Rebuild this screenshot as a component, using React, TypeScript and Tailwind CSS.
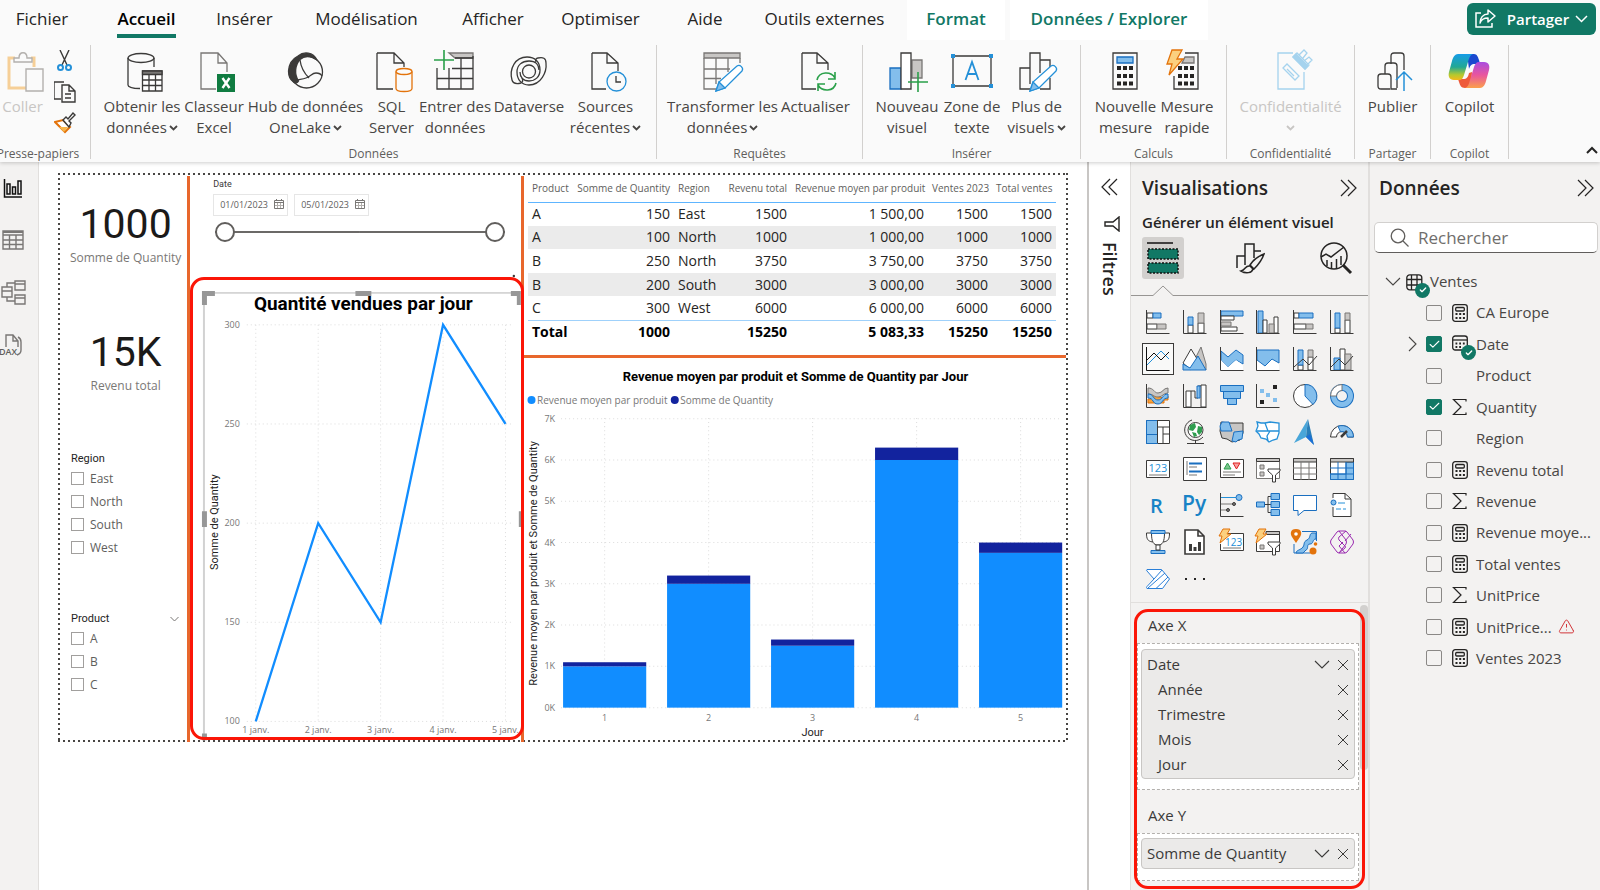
import { ReactNode, useState } from "react";
import { Check, TriangleAlert } from "lucide-react";

const BLUE = "#83beec";
const EDGE = "#1a6fc0";
const GRAY = "#c8c6c4";
const MID = "#797775";
const DARK = "#3b3a39";

const GLYPHS = {
  down: { w: 16, h: 10, d: "M1 1l7 7 7-7" },
  right: { w: 10, h: 16, d: "M1 1l7 7-7 7" },
  smallDown: { w: 9, h: 6, d: "M1 1l3.500 3.500L8 1" },
  up: { w: 12, h: 8, d: "M1 7l5-5 5 5" },
  close: { w: 12, h: 12, d: "M1 1l10 10M11 1L1 11" },
  open: { w: 17, h: 18, d: "M1 1l8 8-8 8M8 1l8 8-8 8" },
  collapse: { w: 17, h: 18, d: "M9 1L1 9l8 8M16 1L8 9l8 8" },
};

function Glyph({ name, weight = 1.2 }: { name: keyof typeof GLYPHS; weight?: number }) {
  const g = GLYPHS[name];
  return (
    <svg
      width={g.w}
      height={g.h}
      viewBox={`0 0 ${g.w} ${g.h}`}
      fill="none"
      stroke="currentColor"
      strokeWidth={weight}
      className="block shrink-0"
    >
      <path d={g.d} />
    </svg>
  );
}

/* ---------- ribbon ---------- */

const TABS = [
  { label: "Fichier", className: "w-[84px]" },
  { label: "Accueil", className: "w-[125px]" },
  { label: "Insérer", className: "w-[71px]" },
  { label: "Modélisation", className: "w-[173px]" },
  { label: "Afficher", className: "w-[80px]" },
  { label: "Optimiser", className: "w-[135px]" },
  { label: "Aide", className: "w-[74px]" },
  { label: "Outils externes", className: "w-[165px]" },
];

function RibbonIcon({ children }: { children: ReactNode }) {
  return (
    <svg
      width="40"
      height="40"
      viewBox="0 0 40 40"
      fill="none"
      stroke={DARK}
      strokeWidth="1.3"
      className="overflow-visible"
    >
      {children}
    </svg>
  );
}

const ICONS = {
  getData: (
    <RibbonIcon>
      <ellipse cx="19" cy="6" rx="13" ry="4.500" />
      <path d="M6 6v27c0 2 5 3.500 12 3.500M32 6v9" />
      <path d="M20.500 19h19.500v20H20.500z" fill="#fff" />
      <path d="M20.500 19h19.500v3.500H20.500z" fill={MID} />
      <path d="M20.500 28h19.500M20.500 33.500h19.500M27 22v17M33.500 22v17" />
    </RibbonIcon>
  ),
  excel: (
    <RibbonIcon>
      <path d="M33 20V11L24 1H7v36h15M24 1v10h9" stroke={MID} />
      <path d="M23 22h18v18H23z" fill="#107c41" stroke="none" />
      <path d="M28.500 26l7 10M35.500 26l-7 10" stroke="#fff" strokeWidth="2.400" />
    </RibbonIcon>
  ),
  hub: (
    <RibbonIcon>
      <path
        d="M12 4C8 6 3 11 2.500 19c0 5 2 9 5 11 2 2 4 1 5-1C8 22 9 13 14 7.500 19 3 25 4 31 8 27 0 18-1 12 4z"
        fill={DARK}
      />
      <circle cx="20.500" cy="20" r="16" />
      <path d="M14 8c1 8 4 13 9 18M7 30c4-3 8-2 13-4 5-2 6-5 10-5 3 0 5 1 6 3" />
    </RibbonIcon>
  ),
  sql: (
    <RibbonIcon>
      <path d="M5 1v36h16M5 1h17l10 10v4M22 1v10h10" />
      <path d="M24 19.500v17c0 4 16 4 16 0v-17" stroke="#e3730b" fill="#fafafa" />
      <ellipse cx="32" cy="19.500" rx="8" ry="3" stroke="#e3730b" />
    </RibbonIcon>
  ),
  enter: (
    <RibbonIcon>
      <path d="M14 1h24v5H20z" fill={GRAY} stroke={MID} />
      <path d="M2 16v21h36V4M2 26.500h36M17 16.500h21M14 16v21M26 6v31M20 6h18" />
      <path d="M9-2v20M-1 8h20" stroke="#2aa04a" strokeWidth="1.600" />
    </RibbonIcon>
  ),
  dataverse: (
    <RibbonIcon>
      <path d="M12 31c-4 1-8 1-9-3C0 17 6 5 18 5c8 0 13 5 13 13 0 7-5 11-11 11s-9-4-9-9" />
      <path d="M29 6c5-1 8 0 8 5 1 9-5 22-17 22-8 0-12-6-12-13S13 9 20 9s10 4 10 9" />
      <path d="M12 31c2-1 2-3 1-5M29 6c-2 0-3 2-2 4" />
      <circle cx="20" cy="19.500" r="6.500" />
    </RibbonIcon>
  ),
  recent: (
    <RibbonIcon>
      <path d="M6 1v36h14M6 1h15l11 10v8M21 1v10h11" />
      <circle cx="30.500" cy="29.500" r="9.500" stroke="#2490d8" />
      <path d="M30 24v6h5" />
    </RibbonIcon>
  ),
  transform: (
    <RibbonIcon>
      <path d="M1 1h36v5H1z" fill={GRAY} stroke={MID} />
      <path d="M37 6v5M1 6v31h12M1 17h26M1 26.500h17M13 6v26M25 6v14" stroke={MID} />
      <path d="M13 39l3-9 18-16c3-2 7 2 5 5L22 36z" stroke="#2490d8" fill="#fff" />
      <path d="M13 39l3-9 6 6z" fill={BLUE} stroke="#2490d8" />
    </RibbonIcon>
  ),
  refresh: (
    <RibbonIcon>
      <path d="M6 1v36h14M6 1h15l11 10v7M21 1v10h11" />
      <path
        d="M21 28c2-9 14-9 18-2M39 20v7h-7M40 31c-2 9-14 9-18 2M22 39v-7h7"
        stroke="#2aa04a"
        strokeWidth="1.600"
      />
    </RibbonIcon>
  ),
  newVisual: (
    <RibbonIcon>
      <path d="M25 8h10v18H25z" fill={GRAY} stroke={MID} />
      <path d="M3 16h11v21H3z" fill={BLUE} stroke={EDGE} />
      <path d="M14 37V1h10v36z" fill="#fff" />
      <path d="M31 20v20M21 30h20" stroke="#2aa04a" strokeWidth="1.600" />
    </RibbonIcon>
  ),
  textBox: (
    <RibbonIcon>
      <path d="M1 4h38v30H1z" />
      <path d="M-1 2h4v4h-4zM37 2h4v4h-4zM-1 32h4v4h-4zM37 32h4v4h-4z" fill="#2490d8" stroke="none" />
      <path d="M13.500 28L20 10l6.500 18M16 22h8" stroke="#2490d8" strokeWidth="1.800" />
    </RibbonIcon>
  ),
  moreVisuals: (
    <RibbonIcon>
      <path d="M13 37H3V16h10v16M13 26V1h10v20M23 8h10v8M33 26v11H23" />
      <path d="M13 39l3-9 18-16c3-2 7 2 5 5L22 36z" stroke="#2490d8" fill="#fff" />
      <path d="M13 39l3-9 6 6z" fill={BLUE} stroke="#2490d8" />
    </RibbonIcon>
  ),
  measure: (
    <RibbonIcon>
      <path d="M7 1h24v36H7z" />
      <path d="M11 5h16v6H11z" fill={BLUE} stroke={EDGE} />
      <path
        d="M11 16h16M11 24h16M11 31.500h16"
        strokeWidth="4"
        strokeDasharray="4 2"
        stroke="#252423"
      />
    </RibbonIcon>
  ),
  quick: (
    <RibbonIcon>
      <path d="M18 1h13v36H7V24" />
      <path d="M18 5h9v6H15z" fill={GRAY} stroke={MID} />
      <path d="M11 16h16M11 24h16M11 31.500h16" strokeWidth="4" strokeDasharray="4 2" stroke="#252423" />
      <path d="M5-2h10l-5 9h6L2 23l3-11H0z" fill="#fbd07f" stroke="#e3730b" />
    </RibbonIcon>
  ),
  sensitivity: (
    <RibbonIcon>
      <g stroke="#a5d3ee">
        <path d="M22 1H7v36h26V20" />
        <path d="M12 16l4-4 12 12-4 4zM16 17l7 7" />
        <path d="M22 5l4-4 12 12-4 4zM28 3l5-5 3 3-4 5M33 9l5-4 3 3-5 5" />
        <path d="M22 5l3-3 12 12-3 3z" fill="#a5d3ee" />
      </g>
    </RibbonIcon>
  ),
  publish: (
    <RibbonIcon>
      <path d="M18 12V4c0-2 1-3 3-3h7c2 0 3 1 3 3v14M12 22v-8c0-2 1-3 3-3h6c2 0 3 1 3 3v8" />
      <path d="M17 37H8c-1 0-3 0-3-3v-9c0-2 1-3 3-3h7c2 0 3 1 3 3v12h6M24 22v14" />
      <path d="M31 39V20M23 28l8-8 8 8" stroke="#2490d8" strokeWidth="1.500" />
    </RibbonIcon>
  ),
  copilot: (
    <RibbonIcon>
      <defs>
        <linearGradient id="cp-a" x1="0" y1="0" x2="0" y2="1">
          <stop offset="0" stopColor="#159ce8" />
          <stop offset="0.500" stopColor="#22a894" />
          <stop offset="0.800" stopColor="#b5c92e" />
          <stop offset="1" stopColor="#f5b91b" />
        </linearGradient>
        <linearGradient id="cp-b" x1="0" y1="0" x2="0" y2="1">
          <stop offset="0" stopColor="#a94de0" />
          <stop offset="0.500" stopColor="#e9559e" />
          <stop offset="1" stopColor="#fba04b" />
        </linearGradient>
      </defs>
      <g stroke="none" transform="translate(-1 0)">
        <path d="M18 2h7c3 0 4 3 5 6l1 4h-5c-4 0-5 2-6 5z" fill="#1a49cf" />
        <path d="M22 36h-6c-4 0-5-3-6-6l-1-3h5c4 0 5-2 6-6l3-1z" fill="#ee5a3a" />
        <path d="M9 2h15c-3 1-4 4-5 8l-4 13c-1 3-2 5-5 5H5c-5 0-6-4-5-8L3 9c1-4 3-7 6-7z" fill="url(#cp-a)" />
        <path d="M31 36H16c3-1 4-4 5-8l4-13c1-3 2-5 5-5h5c5 0 6 4 5 8l-3 11c-1 4-3 7-6 7z" fill="url(#cp-b)" />
      </g>
    </RibbonIcon>
  ),
};

interface Tool {
  icon: ReactNode;
  lines: string[];
  className: string;
  menu?: boolean;
  disabled?: boolean;
}

const GROUPS: { name: string; className: string; tools: Tool[] }[] = [
  {
    name: "Données",
    className: "w-[566px]",
    tools: [
      { icon: ICONS.getData, lines: ["Obtenir les", "données"], className: "w-[77px]", menu: true },
      { icon: ICONS.excel, lines: ["Classeur", "Excel"], className: "w-[67px]" },
      { icon: ICONS.hub, lines: ["Hub de données", "OneLake"], className: "w-[116px]", menu: true },
      { icon: ICONS.sql, lines: ["SQL", "Server"], className: "w-[56px]" },
      { icon: ICONS.enter, lines: ["Entrer des", "données"], className: "w-[71px]" },
      { icon: ICONS.dataverse, lines: ["Dataverse"], className: "w-[77px]" },
      { icon: ICONS.recent, lines: ["Sources", "récentes"], className: "w-[76px]", menu: true },
    ],
  },
  {
    name: "Requêtes",
    className: "w-[206px]",
    tools: [
      { icon: ICONS.transform, lines: ["Transformer les", "données"], className: "w-[112px]", menu: true },
      { icon: ICONS.refresh, lines: ["Actualiser"], className: "w-[74px]" },
    ],
  },
  {
    name: "Insérer",
    className: "w-[218px]",
    tools: [
      { icon: ICONS.newVisual, lines: ["Nouveau", "visuel"], className: "w-[67px]" },
      { icon: ICONS.textBox, lines: ["Zone de", "texte"], className: "w-[63px]" },
      { icon: ICONS.moreVisuals, lines: ["Plus de", "visuels"], className: "w-[66px]", menu: true },
    ],
  },
  {
    name: "Calculs",
    className: "w-[146px]",
    tools: [
      { icon: ICONS.measure, lines: ["Nouvelle", "mesure"], className: "w-[67px]" },
      { icon: ICONS.quick, lines: ["Mesure", "rapide"], className: "w-[56px]" },
    ],
  },
  {
    name: "Confidentialité",
    className: "w-[128px]",
    tools: [
      { icon: ICONS.sensitivity, lines: ["Confidentialité", ""], className: "w-[110px]", menu: true, disabled: true },
    ],
  },
  {
    name: "Partager",
    className: "w-[76px]",
    tools: [{ icon: ICONS.publish, lines: ["Publier"], className: "w-[60px]" }],
  },
  {
    name: "Copilot",
    className: "w-[78px]",
    tools: [{ icon: ICONS.copilot, lines: ["Copilot"], className: "w-[60px]" }],
  },
];

function ToolButton({ tool }: { tool: Tool }) {
  return (
    <button
      disabled={tool.disabled}
      className={`flex shrink-0 flex-col items-center text-[15px] leading-[21px] whitespace-nowrap ${
        tool.disabled ? "text-[#c8c6c4]" : "text-[#484644]"
      } ${tool.className}`}
    >
      {tool.icon}
      <span className="mt-1">{tool.lines[0]}</span>
      {tool.lines.length > 1 && (
        <span className="flex h-[21px] items-center gap-0.5">
          {tool.lines[1]}
          {tool.menu && <Glyph name="smallDown" weight={1.8} />}
        </span>
      )}
    </button>
  );
}

function Ribbon() {
  return (
    <header className="relative z-10 h-[162px] bg-[#fafafa] shadow-[0_1px_4px_rgba(0,0,0,0.2)]">
      <nav className="flex h-[45px] items-start text-[17px] text-[#252423]">
        {TABS.map((t) => (
          <button
            key={t.label}
            className={`flex h-[38px] shrink-0 justify-center whitespace-nowrap ${t.className}`}
          >
            <span
              className={
                t.label === "Accueil"
                  ? "h-[38px] border-b-4 border-[#117865] pt-1.5 font-semibold text-black"
                  : "pt-1.5"
              }
            >
              {t.label}
            </span>
          </button>
        ))}
        <button className="h-10 w-[98px] shrink-0 bg-white pb-[3px] font-semibold text-[#117865]">
          Format
        </button>
        <button className="ml-[5px] h-10 w-[198px] shrink-0 bg-white pb-[3px] font-semibold text-[#117865]">
          Données / Explorer
        </button>
        <button className="mt-[3px] mr-1 ml-auto flex h-8 w-[129px] shrink-0 items-center justify-center gap-2.5 rounded-md bg-[#117865] text-[15px] font-semibold text-white">
          <svg width="22" height="20" viewBox="0 0 22 20" fill="none" stroke="#fff" strokeWidth="1.500">
            <path d="M6 4H1v14h16v-4" />
            <path d="M13 1l7 6-7 6V9c-4 0-7 2-8 5 0-5 3-9 8-9z" strokeLinejoin="round" />
          </svg>
          <span className="flex items-center gap-1.5">
            Partager
            <svg width="13" height="8" viewBox="0 0 13 8" fill="none" stroke="#fff" strokeWidth="1.500">
              <path d="M1 1l5.500 5.500L12 1" />
            </svg>
          </span>
        </button>
      </nav>

      <div className="flex">
        <div className="flex h-[114px] w-[91px] shrink-0 flex-col justify-between border-r border-[#d2d0ce]">
          <div className="flex pt-[5px]">
            <button disabled className="flex w-[45px] flex-col items-center pt-0.5 text-[15px] leading-[21px] text-[#c8c6c4]">
              <svg width="40" height="40" viewBox="0 0 40 40" fill="none" strokeWidth="1.400" className="overflow-visible">
                <path d="M12 6H6v30h17M28 6h3v9" stroke="#f6cf97" strokeWidth="3" />
                <path d="M11 10V6h5c0-7 8-7 8 0h5v4z" stroke="#b3b0ad" fill="#fafafa" />
                <path d="M23 17h17v22H23z" stroke="#b3b0ad" fill="#fafafa" />
              </svg>
              <span className="mt-1">Coller</span>
            </button>
            <div className="flex flex-col gap-[9px] pl-[9px]">
              <button aria-label="Couper">
                <svg width="22" height="22" viewBox="0 0 22 22" fill="none" stroke={DARK} strokeWidth="1.400">
                  <path d="M6 0l7 15M15 0L8 15" />
                  <circle cx="6.500" cy="17.500" r="2.500" stroke="#2490d8" strokeWidth="2" />
                  <circle cx="14.500" cy="17.500" r="2.500" stroke="#2490d8" strokeWidth="2" />
                </svg>
              </button>
              <button aria-label="Copier">
                <svg width="22" height="22" viewBox="0 0 22 22" fill="none" stroke={DARK} strokeWidth="1.400">
                  <path d="M7 18H0V1h10M8 4h7l6 6v11H8zM15 4v6h6M11 13h6M11 17h6" />
                </svg>
              </button>
              <button aria-label="Reproduire la mise en forme">
                <svg width="22" height="22" viewBox="0 0 22 22" fill="none" strokeWidth="1.400">
                  <path d="M1 10l8-2 7 7-5 5z" fill="#fff" stroke="#e3730b" strokeWidth="2" />
                  <path d="M5 15h9l-4 5z" fill="#f7b64b" />
                  <path d="M9 8l3-3 2 2 5-6 2 2-6 6 2 2-2 4z" stroke={DARK} fill="#fff" />
                </svg>
              </button>
            </div>
          </div>
          <p className="-mb-px flex justify-center pr-3.5 text-[12px] leading-3 whitespace-nowrap text-[#605e5c]">
            Presse-papiers
          </p>
        </div>
        {GROUPS.map((g) => (
          <div
            key={g.name}
            className={`flex h-[114px] shrink-0 flex-col justify-between border-r border-[#d2d0ce] ${g.className}`}
          >
            <div className="flex justify-center pt-[7px]">
              {g.tools.map((t) => (
                <ToolButton key={t.lines[0]} tool={t} />
              ))}
            </div>
            <p className="-mb-px text-center text-[12px] leading-3 text-[#605e5c]">{g.name}</p>
          </div>
        ))}
        <button aria-label="Réduire le ruban" className="mr-0.5 ml-auto self-end pb-[5px]">
          <Glyph name="up" weight={2} />
        </button>
      </div>
    </header>
  );
}

/* ---------- left rail ---------- */

function Rail() {
  return (
    <nav className="flex w-[39px] shrink-0 flex-col items-start gap-7 border-r border-[#e1dfdd] bg-[#f3f2f1] pt-[14px]">
      <button aria-label="Rapport" className="h-6">
        <svg width="24" height="24" viewBox="0 0 24 24" fill="none" stroke="#111" strokeWidth="1.500">
          <path d="M4.500 3v18H22M7 8h3v10H7zM12.500 11h3v7h-3zM18 5h3v13h-3z" />
        </svg>
      </button>
      <button aria-label="Table" className="h-6">
        <svg width="26" height="24" viewBox="0 0 26 24" fill="none" stroke={MID} strokeWidth="1.400">
          <path d="M3 3h20v18H3zM3 7h20M3 12h20M3 16.500h20M9.500 7v14M16 7v14" />
          <path d="M3 4h20" strokeWidth="2" />
        </svg>
      </button>
      <button aria-label="Modèle" className="h-6">
        <svg width="26" height="26" viewBox="0 0 26 26" fill="none" stroke={MID} strokeWidth="1.400">
          <path d="M15 1h10v9H15zM15 4h10M15 15h10v9H15zM15 18h10M2 7h10v10H2zM2 11h10M7 7V3h8M7 17v4h8" />
        </svg>
      </button>
      <button aria-label="Vue de requête DAX" className="h-6">
        <svg width="24" height="26" viewBox="0 0 24 26" fill="none" stroke={MID} strokeWidth="1.400">
          <path d="M6 15V3h7l5 6v6M13 3v6h5M18 5c2 1 3 3 3 5v8c0 2-1 4-4 5" />
          <text x="-1" y="23" fontSize="9" fontWeight="600" fill="#605e5c" stroke="none">
            DAX
          </text>
        </svg>
      </button>
    </nav>
  );
}

/* ---------- report ---------- */

function Kpi({ value, label }: { value: string; label: string }) {
  return (
    <div className="pl-1 text-center">
      <p className="font-['Roboto',sans-serif] text-[41px] leading-[48px] text-[#1b1a19]">{value}</p>
      <p className="text-[12px] leading-5 whitespace-nowrap text-[#7a7876]">{label}</p>
    </div>
  );
}

function Slicer({ title, options, open }: { title: string; options: string[]; open?: boolean }) {
  return (
    <fieldset className="pr-2 pl-[11px]">
      <legend className="flex w-full items-center justify-between font-['Roboto',sans-serif] text-[11px] leading-4 text-[#252423]">
        {title}
        {open && (
          <svg width="9" height="6" viewBox="0 0 9 6" fill="none" stroke={MID}>
            <path d="M.5 1l4 4 4-4" />
          </svg>
        )}
      </legend>
      {options.map((o) => (
        <label key={o} className="flex h-[23px] items-center gap-1.5 text-[12px] text-[#605e5c]">
          <input type="checkbox" className="size-[13px] appearance-none border border-[#a19f9d] bg-white" />
          {o}
        </label>
      ))}
    </fieldset>
  );
}

function DateBox({ label, value }: { label: string; value: string }) {
  return (
    <label className="flex h-[22px] w-[75px] items-center justify-between border border-[#e6e6e6] pr-[3px] pl-1.5">
      <input aria-label={label} defaultValue={value} className="w-[52px] text-[9px] text-[#605e5c]" />
      <svg width="10" height="10" viewBox="0 0 10 10" fill="none" stroke={MID} className="-mt-0.5">
        <path d="M.5 1.500h9v8h-9zM.5 3.500h9M2.500 0v2M7.500 0v2" />
        <path d="M3.500 4v5M6.500 4v5M1 6.500h8" stroke="#b3b0ad" />
      </svg>
    </label>
  );
}

const THUMB =
  "h-5 w-1/2 appearance-none bg-[linear-gradient(#6b6967,#6b6967)] bg-[length:100%_2px] bg-center bg-no-repeat [&::-webkit-slider-thumb]:size-5 [&::-webkit-slider-thumb]:appearance-none [&::-webkit-slider-thumb]:rounded-full [&::-webkit-slider-thumb]:border-2 [&::-webkit-slider-thumb]:border-[#605e5c] [&::-webkit-slider-thumb]:bg-white";

function DateSlicer() {
  return (
    <section className="h-[102px] pt-0.5 pr-4 pl-[23px]">
      <h3 className="font-['Roboto',sans-serif] text-[9px] leading-3 text-[#3b3a39]">Date</h3>
      <div className="mt-1 flex gap-1.5">
        <DateBox label="Date de début" value="01/01/2023" />
        <DateBox label="Date de fin" value="05/01/2023" />
      </div>
      <div className="mt-1.5 flex pl-0.5">
        <input type="range" aria-label="Début" defaultValue={0} className={THUMB} />
        <input type="range" aria-label="Fin" defaultValue={100} className={THUMB} />
      </div>
    </section>
  );
}

const DAYS = [100, 200, 150, 300, 250];
const dayX = (i: number) => 66 + i * 62.65;
const qtyY = (v: number) => 445 - (v - 100) * 1.99;

function LineChart() {
  return (
    <section className="relative">
      <svg
        viewBox="0 0 332 464"
        className="block w-full overflow-visible"
        role="img"
        aria-label="Quantité vendues par jour"
      >
        <path d="M14 14v450" stroke="#d2d2d2" strokeWidth="2" />
        <path d="M14 15h318" stroke="#b3b3b3" />
        <path
          d="M12 13h13v5h-8v9h-5zM166 13h16v5h-16zM322 13h10v14h-4v-9h-6zM12 234h5v16h-5zM330 234h3v16h-3zM12 457h5v7h-5z"
          fill="#979797"
        />
        <g stroke="#dcdcdc" strokeDasharray="1 3">
          {[100, 150, 200, 250, 300].map((v) => (
            <path key={v} d={`M57 ${qtyY(v)}H322`} />
          ))}
          {DAYS.map((_, i) => (
            <path key={i} d={`M${dayX(i)} 47V445`} />
          ))}
        </g>
        <polyline
          points={DAYS.map((v, i) => `${dayX(i)},${qtyY(v)}`).join(" ")}
          fill="none"
          stroke="#118dff"
          strokeWidth="2.300"
        />
        <text x="174" y="32" textAnchor="middle" fontSize="19" fontWeight="700" className="font-['Roboto',sans-serif]">
          Quantité vendues par jour
        </text>
        <g fontSize="9" fill="#777">
          {[100, 150, 200, 250, 300].map((v) => (
            <text key={v} x="50" y={qtyY(v) + 3} textAnchor="end">
              {v}
            </text>
          ))}
          {DAYS.map((_, i) => (
            <text key={i} x={dayX(i)} y="457" textAnchor="middle">
              {i + 1} janv.
            </text>
          ))}
        </g>
        <text
          transform="translate(28 245) rotate(-90)"
          textAnchor="middle"
          fontSize="11"
          fill="#252423"
          className="font-['Roboto',sans-serif]"
        >
          Somme de Quantity
        </text>
        <circle cx="325" cy="-2" r="1.200" fill="#3b3a39" />
      </svg>
      <div className="pointer-events-none absolute -top-px right-0 bottom-0 left-0 -mr-[3px] rounded-[14px] border-[3px] border-[#fb1607]" />
    </section>
  );
}

const ROWS = [
  ["A", "150", "East", "1500", "1 500,00", "1500", "1500"],
  ["A", "100", "North", "1000", "1 000,00", "1000", "1000"],
  ["B", "250", "North", "3750", "3 750,00", "3750", "3750"],
  ["B", "200", "South", "3000", "3 000,00", "3000", "3000"],
  ["C", "300", "West", "6000", "6 000,00", "6000", "6000"],
];
const TOTALS = ["Total", "1000", "", "15250", "5 083,33", "15250", "15250"];
const HEADS = [
  { label: "Product", className: "w-[44px]" },
  { label: "Somme de Quantity", className: "w-[102px]" },
  { label: "Region", className: "w-[48px]" },
  { label: "Revenu total", className: "w-[69px]" },
  { label: "Revenue moyen par produit", className: "w-[137px]" },
  { label: "Ventes 2023", className: "w-[64px]" },
  { label: "Total ventes", className: "w-[64px]" },
];
const align = (i: number) => (i === 0 || i === 2 ? "text-left" : "text-right");

function SalesTable() {
  return (
    <section className="h-[179px] pr-2.5 pl-1">
      <table className="h-[167px] w-full table-fixed border-collapse text-[14px] text-[#252423]">
        <thead>
          <tr className="h-[26px] border-b border-[#5eb5ff] text-[10px] whitespace-nowrap text-[#605e5c]">
            {HEADS.map((h, i) => (
              <th key={h.label} className={`px-1 font-normal ${align(i)} ${h.className}`}>
                {h.label}
              </th>
            ))}
          </tr>
        </thead>
        <tbody>
          {ROWS.map((r, n) => (
            <tr key={n} className={`h-[23px] leading-4 ${n % 2 ? "bg-[#ebebeb]" : ""}`}>
              {r.map((c, i) => (
                <td key={i} className={`px-1 ${align(i)}`}>
                  {c}
                </td>
              ))}
            </tr>
          ))}
        </tbody>
        <tfoot>
          <tr className="h-[23px] border-t border-[#9fd1fb] leading-4 font-bold text-black">
            {TOTALS.map((c, i) => (
              <td key={i} className={`px-1 ${align(i)}`}>
                {c}
              </td>
            ))}
          </tr>
        </tfoot>
      </table>
    </section>
  );
}

const REVENUE = [1000, 3000, 1500, 6000, 3750];
const QTY = [100, 200, 150, 300, 250];
const barX = (i: number) => 80.5 + i * 103.8;
const revY = (v: number) => 349 - (v / 1000) * 41.2;

function BarChart() {
  return (
    <section className="border-t-[3px] border-[#e8672c]">
      <svg viewBox="0 0 541 383" className="block w-full" role="img" aria-label="Revenue moyen par produit">
        <text x="271" y="23" textAnchor="middle" fontSize="13" fontWeight="700" className="font-['Roboto',sans-serif]">
          Revenue moyen par produit et Somme de Quantity par Jour
        </text>
        <circle cx="7.500" cy="42" r="4" fill="#118dff" />
        <circle cx="150.500" cy="42" r="4" fill="#12239e" />
        <g fontSize="10" fill="#777">
          <text x="13" y="46">
            Revenue moyen par produit
          </text>
          <text x="156" y="46">
            Somme de Quantity
          </text>
        </g>
        <g stroke="#dcdcdc" strokeDasharray="1 3">
          {[0, 1, 2, 3, 4, 5, 6, 7].map((k) => (
            <path key={k} d={`M37 ${revY(k * 1000)}H536`} />
          ))}
          {REVENUE.map((_, i) => (
            <path key={i} d={`M${barX(i)} 60V349`} />
          ))}
        </g>
        {REVENUE.map((v, i) => (
          <g key={i}>
            <rect x={barX(i) - 41.5} y={revY(v)} width="83" height={349 - revY(v)} fill="#118dff" />
            <rect x={barX(i) - 41.5} y={revY(v + QTY[i])} width="83" height={revY(v) - revY(v + QTY[i])} fill="#12239e" />
          </g>
        ))}
        <g fontSize="9" fill="#777">
          {[0, 1, 2, 3, 4, 5, 6, 7].map((k) => (
            <text key={k} x="31" y={revY(k * 1000) + 3} textAnchor="end">
              {k}K
            </text>
          ))}
          {REVENUE.map((_, i) => (
            <text key={i} x={barX(i)} y="362" textAnchor="middle">
              {i + 1}
            </text>
          ))}
        </g>
        <g fontSize="11" fill="#252423" textAnchor="middle" className="font-['Roboto',sans-serif]">
          <text x="288" y="377">
            Jour
          </text>
          <text transform="translate(13 205) rotate(-90)">Revenue moyen par produit et Somme de Quantity</text>
        </g>
      </svg>
    </section>
  );
}

// page boundary: 2px dots every 5px
const BOUNDARY =
  "[background:repeating-linear-gradient(90deg,#484644_0_2px,#fff0_2px_5px)_top/100%_2px_no-repeat,repeating-linear-gradient(90deg,#484644_0_2px,#fff0_2px_5px)_bottom/100%_2px_no-repeat,repeating-linear-gradient(180deg,#484644_0_2px,#fff0_2px_5px)_left/2px_100%_no-repeat,repeating-linear-gradient(180deg,#484644_0_2px,#fff0_2px_5px)_right/2px_100%_no-repeat]";

function Report() {
  return (
    <main className="min-w-0 flex-1 px-[19px] pt-[11px]">
      <div className={`grid grid-cols-[128fr_336fr_541fr] px-0.5 pt-[3px] ${BOUNDARY}`}>
        <div className="pt-6">
          <Kpi value="1000" label="Somme de Quantity" />
          <div className="mt-[60px]">
            <Kpi value="15K" label="Revenu total" />
          </div>
          <div className="mt-[55px]">
            <Slicer title="Region" options={["East", "North", "South", "West"]} />
          </div>
          <div className="mt-[52px]">
            <Slicer title="Product" options={["A", "B", "C"]} open />
          </div>
        </div>
        <div className="border-l-[3px] border-[#e8672c]">
          <DateSlicer />
          <LineChart />
        </div>
        <div className="border-l-[3px] border-[#e8672c]">
          <SalesTable />
          <BarChart />
        </div>
      </div>
    </main>
  );
}

/* ---------- visualisations ---------- */

const AXES = <path d="M.5 0v23.500h23" stroke={DARK} fill="none" />;
const BOLT = <path d="M3-1h7L7 4h4L0 13l2-7h-3z" fill="#fbd07f" stroke="#e3730b" />;
const FUNNEL = <path d="M12 12h12v2l-4.500 4v7h-3v-7L12 14z" fill="#fff" />;

const GALLERY: { name: string; art: ReactNode }[] = [
  {
    name: "Barres empilées",
    art: (
      <>
        <path d="M1 3h6v5H1zM1 14h10v5H1z" fill="#fff" />
        <path d="M7 3h8v5H7z" fill={BLUE} stroke={EDGE} />
        <path d="M11 14h9v5h-9z" fill={GRAY} stroke={MID} />
        {AXES}
      </>
    ),
  },
  {
    name: "Histogramme empilé",
    art: (
      <>
        <path d="M5 15h5v8H5zM15 13h6v10h-6z" fill="#fff" />
        <path d="M5 7h5v8H5z" fill={BLUE} stroke={EDGE} />
        <path d="M15 3h6v10h-6z" fill={GRAY} stroke={MID} />
        {AXES}
      </>
    ),
  },
  {
    name: "Barres groupées",
    art: (
      <>
        <path d="M1 1h22v5H1z" fill={BLUE} stroke={EDGE} />
        <path d="M1 6h13v4H1zM1 17h16v4H1z" fill="#fff" />
        <path d="M1 12h10v4H1z" fill={GRAY} stroke={MID} />
        {AXES}
      </>
    ),
  },
  {
    name: "Histogramme groupé",
    art: (
      <>
        <path d="M2 1h5v22H2z" fill={BLUE} stroke={EDGE} />
        <path d="M7 10h4v13H7zM18 7h4v16h-4z" fill="#fff" />
        <path d="M13 14h5v9h-5z" fill={GRAY} stroke={MID} />
        {AXES}
      </>
    ),
  },
  {
    name: "Barres empilées 100 %",
    art: (
      <>
        <path d="M1 3h5v5H1zM1 14h12v5H1z" fill="#fff" />
        <path d="M6 3h14v5H6z" fill={BLUE} stroke={EDGE} />
        <path d="M13 14h7v5h-7z" fill={GRAY} stroke={MID} />
        {AXES}
      </>
    ),
  },
  {
    name: "Histogramme empilé 100 %",
    art: (
      <>
        <path d="M5 18h5v5H5zM15 10h5v13h-5z" fill="#fff" />
        <path d="M5 3h5v15H5z" fill={BLUE} stroke={EDGE} />
        <path d="M15 3h5v7h-5z" fill={GRAY} stroke={MID} />
        {AXES}
      </>
    ),
  },
  {
    name: "Courbes",
    art: (
      <>
        <path d="M1 18l10-10 4-4 8 8" fill="none" stroke="#2490d8" />
        <path d="M1 13l7-7 7 7 8-8" fill="none" stroke="#111" />
        <path d="M.5 0v23.500h23" fill="none" stroke="#111" />
      </>
    ),
  },
  {
    name: "Aires",
    art: (
      <>
        <path d="M12 12l6-12 5 17v6z" fill={GRAY} stroke={MID} />
        <path d="M0 16L8 2l8 13-8 8z" fill="#fff" />
        <path d="M0 17l7 4 8-12 8 14H0z" fill={BLUE} stroke={EDGE} />
      </>
    ),
  },
  {
    name: "Aires empilées",
    art: (
      <>
        <path d="M1 4l7 6 8-7 7 5v9l-7-4-8 7-7-7z" fill={BLUE} stroke={EDGE} />
        <path d="M1 13l7 7 8-7 7 5v5H1z" fill="#fff" stroke="none" />
        {AXES}
      </>
    ),
  },
  {
    name: "Aires empilées 100 %",
    art: (
      <>
        <path d="M1 13l8 6 7-7 7 5v6H1z" fill="#fff" stroke="none" />
        <path d="M1 3h22v13l-7-4-7 7-8-6z" fill={BLUE} stroke={EDGE} />
        {AXES}
      </>
    ),
  },
  {
    name: "Courbe et histogramme empilé",
    art: (
      <>
        <path d="M5 18h5v5H5zM15 10h5v13h-5z" fill="#fff" />
        <path d="M5 3h5v15H5z" fill={BLUE} stroke={EDGE} />
        <path d="M15 3h5v7h-5z" fill={GRAY} stroke={MID} />
        <path d="M1 20l9-8 6 6 8-9" fill="none" />
        {AXES}
      </>
    ),
  },
  {
    name: "Courbe et histogramme groupé",
    art: (
      <>
        <path d="M10 2h5v21h-5z" fill="#fff" />
        <path d="M4 11h6v12H4z" fill={BLUE} stroke={EDGE} />
        <path d="M15 7h6v16h-6z" fill={GRAY} stroke={MID} />
        <path d="M1 20l8-8 6 6 8-9" fill="none" />
        {AXES}
      </>
    ),
  },
  {
    name: "Ruban",
    art: (
      <>
        <path d="M2 11h5c4 0 6 5 15 1v4h-4v3H2v-4h3z" fill="#f7a23b" stroke="#e3730b" />
        <path d="M2 4c6 0 6 5 10 5 5 0 5-5 10-5v5c-5 0-5 4-10 4-5 0-4-3-10-3z" fill={GRAY} stroke={MID} />
        <path d="M2 10c6 0 5 6 10 6 5 0 4-6 10-6v4c-6 0-5 6-10 6-6 0-4-6-10-6z" fill={BLUE} stroke={EDGE} />
        {AXES}
      </>
    ),
  },
  {
    name: "Cascade",
    art: (
      <>
        <path d="M3 7h5v16H3zM18 1h5v22h-5z" fill="#fff" />
        <path d="M8 7h4v7h3V2h3" fill="none" />
        <path d="M14 2h3v12h-3z" fill={BLUE} stroke={EDGE} />
        {AXES}
      </>
    ),
  },
  {
    name: "Entonnoir",
    art: (
      <path d="M.5 1.500h23v6h-23zM3.500 7.500h17v7h-17zM7.500 14.500h9v6h-9z" fill={BLUE} stroke={EDGE} />
    ),
  },
  {
    name: "Nuages de points",
    art: (
      <>
        <path d="M4 5h4v4H4zM10 9h4v4h-4zM17 14h4v4h-4z" fill={BLUE} stroke="none" />
        <path d="M17 1h4v4h-4zM4 16h4v4H4z" fill="#252423" stroke="none" />
        {AXES}
      </>
    ),
  },
  {
    name: "Secteurs",
    art: (
      <>
        <circle cx="12" cy="12" r="11.500" fill="#fff" />
        <path d="M12 .5V12l8 8.500A11.500 11.500 0 0012 .5z" fill={BLUE} stroke={EDGE} />
      </>
    ),
  },
  {
    name: "Anneau",
    art: (
      <>
        <circle cx="12" cy="12" r="8.500" fill="none" stroke={EDGE} strokeWidth="7" />
        <circle cx="12" cy="12" r="8.500" fill="none" stroke={BLUE} strokeWidth="5" />
        <path d="M.5 12A11.500 11.500 0 0112 .5v6A5.500 5.500 0 006.500 12z" fill="#fff" stroke={MID} />
      </>
    ),
  },
  {
    name: "Treemap",
    art: (
      <>
        <path d="M.5.500h23v23H.5z" fill="#fff" />
        <path d="M.5.500h11v14H.5zM.5 14.500h11v9H.5z" fill={BLUE} stroke={EDGE} />
        <path d="M11.500 7h12M17 7v16M17 14h6M11.500 0v23" fill="none" />
      </>
    ),
  },
  {
    name: "Carte",
    art: (
      <>
        <circle cx="12.500" cy="10" r="7.500" fill="#fff" />
        <path d="M7 5l5-2 1 4-3 4-4-1zM15 6l4 1v5l-3 3-2-3zM9 12l4 1 1 3-3 1z" fill="#2f9e4f" stroke="none" />
        <path d="M9 0A10.500 10.500 0 1020 17M12.500 20v3M4 23.500h17" fill="none" />
      </>
    ),
  },
  {
    name: "Carte choroplèthe",
    art: (
      <>
        <path d="M1 2l8 1h14v10l-3 7-8 2-5-3-5-1-2-7z" fill={GRAY} />
        <path d="M2 2h7l3 9H1l-1-5zM14 12l9-1-1 8-4 1-2 2-4-1z" fill={BLUE} stroke={EDGE} />
      </>
    ),
  },
  {
    name: "Carte de formes",
    art: (
      <>
        <path d="M1 2l4 1h4l5-1 9 1v10l-2 6-4 1-4 2-3-3-5-1-2-4-3-3 2-5z" fill="#fff" stroke="#2490d8" strokeWidth="1.300" />
        <path d="M9 3l3 8H1M12 11h11M14 11l-3 5 1 5" fill="none" stroke="#2490d8" strokeWidth="1.300" />
      </>
    ),
  },
  {
    name: "Azure Map",
    art: (
      <>
        <path d="M15-1L1 23l12-6z" fill="#49a6d9" stroke="none" />
        <path d="M15-1l6 26-8-8z" fill="#2a7fb8" stroke="none" />
        <path d="M13 17l8 8-4-11z" fill="#1a6fd8" stroke="none" />
      </>
    ),
  },
  {
    name: "Jauge",
    art: (
      <>
        <path d="M.5 17A11.500 11.500 0 0123.500 17h-6a5.500 5.500 0 00-11 0z" fill="#fff" />
        <path d="M8 6.300A11.500 11.500 0 0123.500 17h-6a5.500 5.500 0 00-7-5.200z" fill={BLUE} stroke={EDGE} />
        <path d="M11 17l6-6" strokeWidth="2.500" />
      </>
    ),
  },
  {
    name: "Carte simple",
    art: (
      <>
        <path d="M.5 3.500h23v17H.5z" fill="#fff" />
        <text x="2.500" y="15" fontSize="11" fill="#2490d8" stroke="none">
          123
        </text>
        <path d="M3 18h18" stroke={MID} />
      </>
    ),
  },
  {
    name: "Carte à plusieurs lignes",
    art: (
      <>
        <path d="M.5.500h23v23H.5z" fill="#fff" />
        <path d="M6 6.500h13M6 14.500h13" stroke={EDGE} strokeWidth="2" />
        <path d="M4 4v14M6 10h8M6 18h8" stroke={MID} />
      </>
    ),
  },
  {
    name: "Indicateur de performance clé",
    art: (
      <>
        <path d="M.5 2.500h23v18H.5z" fill="#fff" />
        <path d="M4 12l3.500-6 3.500 6z" fill="#7bc58c" stroke="#2f9e4f" />
        <path d="M13 6h7l-3.500 6z" fill="#f7a0a0" stroke="#e02020" />
        <path d="M3 15h18M3 18h12" stroke={MID} />
      </>
    ),
  },
  {
    name: "Segment",
    art: (
      <>
        <path d="M.5 1.500h23v20H.5z" fill="#fff" stroke={MID} />
        <path d="M.5 1.500h23v3H.5z" fill={GRAY} />
        <path d="M4 8h4v4H4zM4 15h4v4H4z" fill={GRAY} stroke={MID} />
        {FUNNEL}
      </>
    ),
  },
  {
    name: "Tableau",
    art: (
      <>
        <path d="M.5 1.500h23v21H.5z" fill="#fff" />
        <path d="M.5 1.500h23v3.500H.5z" fill={GRAY} />
        <path d="M0 11h24M0 17h24M8 5v18M16 5v18" stroke={MID} />
      </>
    ),
  },
  {
    name: "Matrice",
    art: (
      <>
        <path d="M.5 1.500h23v21H.5z" fill="#fff" />
        <path d="M16 5h7.500v17.500H.500V17H16z" fill={BLUE} stroke={EDGE} />
        <path d="M.5 1.500h23v3.500H.5z" fill={GRAY} />
        <path d="M0 11h24M0 17h24M8 5v18M16 5v18" stroke={EDGE} />
      </>
    ),
  },
  {
    name: "Visuel R",
    art: (
      <text x="4" y="20" fontSize="20" fontWeight="600" fill="#1883c6" stroke="none">
        R
      </text>
    ),
  },
  {
    name: "Visuel Python",
    art: (
      <text x="-1" y="18" fontSize="21" fontWeight="600" fill="#1883c6" stroke="none">
        Py
      </text>
    ),
  },
  {
    name: "Influenceurs clés",
    art: (
      <>
        <path d="M1 4.500h15" stroke="#2490d8" fill="none" />
        <circle cx="19" cy="4.500" r="3" fill={BLUE} stroke={EDGE} />
        <path d="M1 11h12M1 17h6" stroke={MID} />
        <circle cx="14" cy="11" r="1.500" fill={MID} />
        <circle cx="8" cy="17" r="1.500" fill={MID} />
        {AXES}
      </>
    ),
  },
  {
    name: "Arborescence hiérarchique",
    art: (
      <>
        <path d="M8 11.500h7M12 3.500v16M12 3.500h3M12 19.500h3" fill="none" />
        <path d="M.5 9h8v5h-8zM15 .500h8.500v6H15zM15 8.500h8.500v6H15zM15 16.500h8.500v6H15z" fill={BLUE} stroke={EDGE} />
      </>
    ),
  },
  {
    name: "Questions et réponses",
    art: <path d="M.5 2.500h23v15H11l-6 5v-5H.5z" fill="#fff" stroke={EDGE} />,
  },
  {
    name: "Récit intelligent",
    art: (
      <>
        <path d="M3 .500h12L21 6v17.500H3z" fill="#fff" stroke="none" />
        <path d="M3 5V.500h12L21 6v17.500H3V14M15 .5V6h6" fill="none" />
        <circle cx="3.500" cy="9.500" r="2.500" fill={BLUE} stroke={EDGE} />
        <path d="M8 10h7M6 16h5M13 16h3" stroke="#2490d8" />
      </>
    ),
  },
  {
    name: "Objectifs",
    art: (
      <>
        <path d="M5 3H.5c0 6 1 8 6 9M19 3h4.500c0 6-1 8-6 9M5.500 3c0 9 2 12 6.500 12s6.500-3 6.500-12z" fill="#fff" />
        <path d="M5 .500h14v3H5zM5 20.500h14v3H5z" fill={BLUE} stroke={EDGE} />
        <path d="M10 15v5h4v-5z" fill="#fff" />
      </>
    ),
  },
  {
    name: "Rapport paginé",
    art: (
      <>
        <path d="M2 0h13l6 6v18H2zM15 0v6h6" fill="#fff" strokeWidth="1.600" />
        <path d="M6 14h3v7H6zM10.500 17h3v4h-3zM15 12h3v9h-3z" fill={DARK} stroke="none" />
      </>
    ),
  },
  {
    name: "Nouvelle carte",
    art: (
      <>
        <path d="M8 3.500h15.500v17H.5V14" fill="#fff" />
        <text x="5" y="16" fontSize="10" fill="#2490d8" stroke="none">
          123
        </text>
        <path d="M3 18h18" stroke={MID} />
        {BOLT}
      </>
    ),
  },
  {
    name: "Nouveau segment",
    art: (
      <>
        <path d="M10 1.500h13.500v20H.5V13" fill="#fff" />
        <path d="M10 1.500h13.500v3H10z" fill={GRAY} />
        <path d="M4 15h4v4H4z" fill={GRAY} stroke={MID} />
        {FUNNEL}
        {BOLT}
      </>
    ),
  },
  {
    name: "ArcGIS",
    art: (
      <>
        <path d="M1 14v9h16M9 1.500h14.500V11" fill="none" stroke={EDGE} />
        <path d="M23 3v6c-4 0-2 5-6 5s-1 5-4 6l-3 3H3c0-3 5-3 7-6s0-5 4-7 2-6 5-7z" fill={BLUE} stroke={EDGE} />
        <path d="M3-1c-6 0-6 5-4 8l4 6 4-6c2-3 2-8-4-8z" fill="#e3730b" stroke="none" />
        <circle cx="3" cy="4" r="1.800" fill="#fff" stroke="none" />
        <circle cx="20" cy="21" r="3.500" fill="#e3730b" stroke="none" />
        <circle cx="22.500" cy="14" r="1.800" fill="#e3730b" stroke="none" />
      </>
    ),
  },
  {
    name: "Power Apps",
    art: (
      <path
        d="M9 1h6q1 0 2 1l6 8q1 2 0 4l-6 8q-1 1-2 1H9q-1 0-2-1l-6-8q-1-2 0-4l6-8q1-1 2-1zM9 1l7 9q1 2 0 4l-7 9M16 1L9 7q-1 1 0 3l6 6q1 1 0 2l-6 5M15 11l6-7M15 23l-6-7 4-4"
        fill="none"
        stroke="#9a2bb0"
      />
    ),
  },
  {
    name: "Power Automate",
    art: (
      <path
        d="M1 2.500h14.500l8 9.500-7 9.500H1q-1-1 0-2L8 12 1 4q-1-1 0-1.500zM8 12l8-9M2 21L19 6M10 21.500L22 10"
        fill="#fff"
        stroke="#2a7fd8"
      />
    ),
  },
];

function Field({ label, indent, menu }: { label: string; indent?: boolean; menu?: boolean }) {
  return (
    <div className={`flex h-[25px] items-center ${indent ? "pl-4" : "pl-[5px]"} pr-[5px]`}>
      <span className="flex-1">{label}</span>
      {menu && (
        <button aria-label={`Options de ${label}`}>
          <Glyph name="down" weight={1.1} />
        </button>
      )}
      <button aria-label={`Supprimer ${label}`} className="ml-[7px]">
        <Glyph name="close" weight={1} />
      </button>
    </div>
  );
}

function Visualisations() {
  return (
    <aside className="flex w-[238px] shrink-0 flex-col border-l border-[#e1dfdd] bg-[#f3f2f1]">
      <div className="flex items-center justify-between pt-3 pr-[11px] pl-[11px]">
        <h2 className="text-[19px] leading-7 font-semibold">Visualisations</h2>
        <button aria-label="Réduire Visualisations">
          <Glyph name="open" />
        </button>
      </div>
      <h3 className="mt-[9px] pl-[11px] text-[15px] leading-[22px] font-semibold whitespace-nowrap">
        Générer un élément visuel
      </h3>
      <div className="mt-1 flex items-center justify-between px-[11px]">
        <button aria-label="Générer" className="flex size-[42px] items-center justify-center rounded-[3px] bg-[#d2d0ce]">
          <svg width="32" height="34" viewBox="0 0 32 34" fill="none" stroke="#111" strokeWidth="1.500">
            <path d="M0 2h26" />
            <path d="M1 8h30v10H1zM1 22h30v10H1z" fill="#117865" strokeDasharray="2 1.500" />
          </svg>
        </button>
        <button aria-label="Mettre en forme" className="flex size-[42px] items-center justify-center">
          <svg width="30" height="32" viewBox="0 0 30 32" fill="none" stroke="#252423" strokeWidth="1.500">
            <path d="M2 26V14h8v9M10 20V2h9v14M19 9h7" />
            <path d="M29 12c-5 2-11 6-14 11l4 4c4-4 8-9 10-15zM15 24c-5-1-4 4-9 5 5 3 11 2 12-2z" />
          </svg>
        </button>
        <button aria-label="Analytique" className="flex size-[42px] items-center justify-center">
          <svg width="34" height="34" viewBox="0 0 34 34" fill="none" stroke="#252423" strokeWidth="1.500">
            <circle cx="15" cy="15" r="13" />
            <path d="M2 16l5-3 5 3 13-10M8 19v6M12.500 21v6M17.500 18v9M22 15v9" />
            <path d="M24 24l8 8" strokeWidth="3" />
          </svg>
        </button>
      </div>
      <svg viewBox="0 0 237 12" className="mt-1.5 block w-full" fill="none" stroke="#979593">
        <path d="M0 10.500h22L32 1l10 9.500h195" />
      </svg>

      <div className="mt-[7px] mr-2 ml-[9px] grid h-[293px] grid-cols-6 grid-rows-8">
        {GALLERY.map((v) => (
          <button
            key={v.name}
            aria-label={v.name}
            className={`flex size-8 items-center justify-center place-self-center ${
              v.name === "Courbes" ? "border border-[#3b3a39] bg-white/50" : ""
            }`}
          >
            <svg width="24" height="24" viewBox="0 0 24 24" stroke={DARK} className="shrink-0 overflow-visible">
              {v.art}
            </svg>
          </button>
        ))}
        <button aria-label="Autres visuels" className="flex items-center justify-center gap-[7px]">
          <span className="size-[2px] bg-[#252423]" />
          <span className="size-[2px] bg-[#252423]" />
          <span className="size-[2px] bg-[#252423]" />
        </button>
      </div>

      <div className="relative mt-[5px] border-t border-[#e1dfdd] px-1.5 pt-2.5 pb-2 text-[15px] text-[#3b3a39]">
        <div className="absolute top-0.5 right-0 h-[165px] w-2 rounded bg-[#d2d0ce]" />
        <h4 className="h-[30px] pl-[11px] leading-[25px]">Axe X</h4>
        <div className="relative mr-[3px] h-[147px] border border-dashed border-[#b3b0ad] bg-white px-[3px] pt-[5px]">
          <div className="rounded-sm border border-[#c8c6c4] bg-[#ebeae9] pt-0.5 pb-px">
            <Field label="Date" menu />
            {["Année", "Trimestre", "Mois", "Jour"].map((f) => (
              <Field key={f} label={f} indent />
            ))}
          </div>
        </div>
        <h4 className="h-[43px] pt-[13px] pl-[11px] leading-[25px]">Axe Y</h4>
        <div className="relative mr-[3px] h-12 border border-dashed border-[#b3b0ad] bg-white px-[3px] pt-1">
          <div className="rounded-sm border border-[#c8c6c4] bg-[#ebeae9] py-0.5">
            <Field label="Somme de Quantity" menu />
          </div>
        </div>
        <div className="pointer-events-none absolute inset-x-[3px] top-1.5 bottom-0 rounded-[14px] border-[3px] border-[#fb1607]" />
      </div>
    </aside>
  );
}

/* ---------- data pane ---------- */

type Kind = "calc" | "date" | "sum" | "none";

const FIELDS: { name: string; kind: Kind; checked?: boolean; warn?: boolean }[] = [
  { name: "CA Europe", kind: "calc" },
  { name: "Date", kind: "date", checked: true },
  { name: "Product", kind: "none" },
  { name: "Quantity", kind: "sum", checked: true },
  { name: "Region", kind: "none" },
  { name: "Revenu total", kind: "calc" },
  { name: "Revenue", kind: "sum" },
  { name: "Revenue moye...", kind: "calc" },
  { name: "Total ventes", kind: "calc" },
  { name: "UnitPrice", kind: "sum" },
  { name: "UnitPrice...", kind: "calc", warn: true },
  { name: "Ventes 2023", kind: "calc" },
];

function Badge() {
  return (
    <span className="absolute -right-2 -bottom-2 flex size-[15px] items-center justify-center rounded-full bg-[#117865]">
      <Check size={8} strokeWidth={4} color="#fff" />
    </span>
  );
}

function KindIcon({ kind }: { kind: Kind }) {
  return (
    <span className="relative ml-2.5 size-4">
      {kind !== "none" && (
        <svg
          width="16"
          height="18"
          viewBox="0 0 16 18"
          fill="none"
          stroke="#252423"
          strokeWidth="1.300"
          className="-mt-px"
        >
          {kind === "calc" && (
            <>
              <rect x=".7" y=".7" width="14.600" height="16.600" rx="2.500" />
              <rect x="3.700" y="3.500" width="8.600" height="3.500" rx="1" />
              <path d="M3.500 10h9.500M3.500 14h9.500" strokeWidth="2" strokeDasharray="2 1.700" />
            </>
          )}
          {kind === "date" && (
            <>
              <rect x=".7" y="1" width="14.600" height="14" rx="2.500" />
              <path d="M1 5h14" />
              <path d="M3.500 8.500h9.500M3.500 12h6" strokeWidth="1.800" strokeDasharray="1.800 1.900" />
            </>
          )}
          {kind === "sum" && <path d="M14 3.500V1.500H1.500L9 9l-7.500 7.500H14v-2" strokeWidth="1.200" />}
        </svg>
      )}
      {kind === "date" && <Badge />}
    </span>
  );
}

function DataPane() {
  const [query, setQuery] = useState("");

  return (
    <aside className="w-[232px] shrink-0 border-l-2 border-[#e1dfdd] bg-[#f3f2f1]">
      <div className="flex items-center justify-between pt-3 pr-1.5 pl-[9px]">
        <h2 className="text-[19px] leading-7 font-semibold">Données</h2>
        <button aria-label="Réduire Données">
          <Glyph name="open" />
        </button>
      </div>
      <label className="mx-1 mt-5 mr-0.5 flex h-[31px] items-center gap-[9px] rounded-[5px] border border-[#d2d0ce] border-b-[#605e5c] bg-white pl-[15px]">
        <svg width="19" height="19" viewBox="0 0 19 19" fill="none" stroke="#605e5c" strokeWidth="1.300" className="shrink-0">
          <circle cx="8" cy="8" r="6.800" />
          <path d="M13 13l5.500 5.500" />
        </svg>
        <input
          value={query}
          onChange={(e) => setQuery(e.target.value)}
          aria-label="Rechercher"
          placeholder="Rechercher"
          className="w-full min-w-0 text-[17px] outline-none placeholder:text-[#706e6c]"
        />
      </label>
      <div className="mt-[13px] flex h-[31px] items-center pl-[15px] text-[15px] text-[#484644]">
        <button aria-label="Réduire Ventes">
          <Glyph name="down" weight={1.1} />
        </button>
        <span className="relative ml-[5px] size-4">
          <svg width="17" height="17" viewBox="0 0 17 17" fill="none" stroke="#252423" strokeWidth="1.300">
            <rect x=".8" y=".8" width="15" height="15" rx="3" />
            <path d="M1 5.500h15M1 11h15M5.500 1v15M11 1v15" />
          </svg>
          <Badge />
        </span>
        <span className="ml-2">Ventes</span>
      </div>
      <ul className="grid h-[377px] grid-rows-12 text-[15px] whitespace-nowrap text-[#484644]">
        {FIELDS.map((f) => (
          <li key={f.name} className="flex items-center pl-[38px]">
            <span className="w-[18px]">
              {f.kind === "date" && (
                <button aria-label="Développer Date" className="block">
                  <Glyph name="right" weight={1.1} />
                </button>
              )}
            </span>
            <label className="flex items-center">
              <span className="grid size-4 place-items-center">
                <input
                  type="checkbox"
                  defaultChecked={f.checked}
                  className="peer size-4 appearance-none rounded-[2px] border border-[#8a8886] [grid-area:1/1] checked:border-[#117865] checked:bg-[#117865]"
                />
                <Check
                  size={13}
                  color="#fff"
                  strokeWidth={2}
                  className="pointer-events-none invisible [grid-area:1/1] peer-checked:visible"
                />
              </span>
              <KindIcon kind={f.kind} />
              <span className="ml-2">{f.name}</span>
            </label>
            {f.warn && <TriangleAlert size={17} strokeWidth={1.4} color="#d13438" className="ml-1.5" />}
          </li>
        ))}
      </ul>
    </aside>
  );
}

export default function App() {
  return (
    <div className="flex min-h-screen flex-col overflow-hidden bg-white font-['Open_Sans','Noto_Sans',sans-serif] text-[#252423]">
      <Ribbon />
      <div className="flex flex-1">
        <Rail />
        <Report />
        <aside className="flex w-[43px] shrink-0 flex-col items-center border-l-2 border-[#c8c6c4] pt-4">
          <button aria-label="Développer Filtres">
            <Glyph name="collapse" />
          </button>
          <svg
            width="16"
            height="16"
            viewBox="0 0 16 16"
            fill="none"
            stroke="#252423"
            strokeWidth="1.400"
            className="mt-5 ml-1"
          >
            <path d="M15 1v14l-6-5H1V6h8z" />
          </svg>
          <span className="mt-2.5 text-[18px] leading-6 font-semibold [writing-mode:vertical-rl]">Filtres</span>
        </aside>
        <Visualisations />
        <DataPane />
      </div>
    </div>
  );
}
